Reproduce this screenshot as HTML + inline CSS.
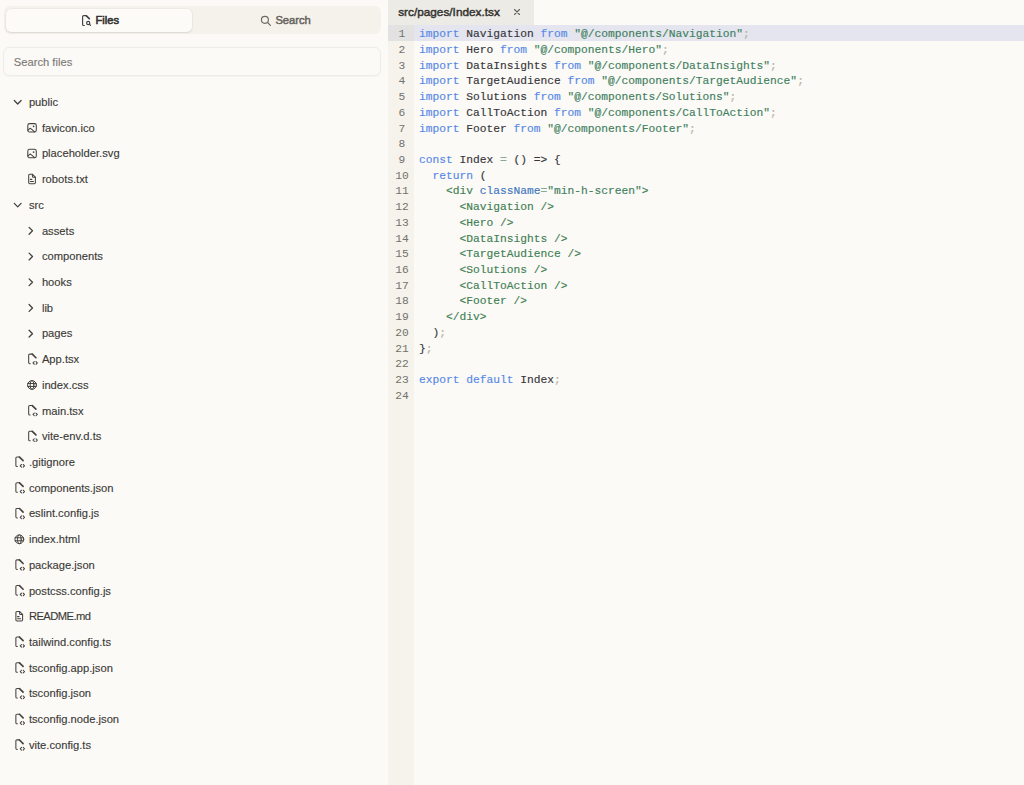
<!DOCTYPE html>
<html><head><meta charset="utf-8">
<style>
*{box-sizing:border-box;margin:0;padding:0}
html,body{width:1024px;height:785px;overflow:hidden;background:#fbfaf6;font-family:"Liberation Sans",sans-serif}
#side{position:absolute;left:0;top:0;width:388px;height:785px;background:#fbfaf6}
#tabs{position:absolute;left:3.6px;top:5.9px;width:377px;height:27.9px;background:#f4f2eb;border-radius:6px}
#tfiles{position:absolute;left:6px;top:8.7px;width:185.9px;height:23.6px;background:#fcfbf8;border-radius:5px;box-shadow:0 0 0 0.5px rgba(60,50,30,.06),0 1px 2px rgba(60,50,30,.10)}
.lbl{position:absolute;font-size:11.2px;line-height:16px;white-space:nowrap;color:#3a3936;-webkit-text-stroke:0.12px currentColor}
#search{position:absolute;left:3.3px;top:47.4px;width:377.3px;height:28.6px;border:1px solid #eeece6;border-radius:6px;background:#fbfaf7;box-shadow:0 1px 1px rgba(0,0,0,.03)}
svg.ov{position:absolute;left:0;top:0;fill:none;stroke:#44433f;stroke-linecap:round;stroke-linejoin:round}
svg.ic{position:absolute;fill:none;stroke:#44433f;stroke-width:2;stroke-linecap:round;stroke-linejoin:round}
#editor{position:absolute;left:388px;top:0;width:636px;height:785px;background:#fbfaf6}
#etab{position:absolute;left:0;top:0;width:146px;height:24.8px;background:#edebe6}
#gutter{position:absolute;left:0;top:24.8px;width:25.7px;height:761px;background:#f6f3ec}
#hl{position:absolute;left:0;top:25.2px;width:636px;height:15.7px;background:#e4e5ee}
#hlg{position:absolute;left:0;top:25.2px;width:25.7px;height:15.7px;background:#e2e2e3}
.ln{position:absolute;left:4px;width:20px;text-align:center;font-family:"Liberation Mono",monospace;font-size:11.25px;line-height:15.72px;color:#72716d}
.cl{position:absolute;left:31px;font-family:"Liberation Mono",monospace;font-size:11.25px;line-height:15.72px;white-space:pre;color:#37363b;-webkit-text-stroke:0.15px currentColor}
.k{color:#5689e6}.s{color:#3f8060}.p{color:#b8b29f}.t{color:#3f8055}.a{color:#3f76bf}.o{color:#8aa890}
</style></head><body>
<div id="side">
  <div id="tabs"></div>
  <div id="tfiles"></div>
  <!-- files tab icon -->
  <svg class="ov" width="388" height="40" viewBox="0 0 388 40" style="stroke-width:1.15"><path d="M84.4 25.5H83.7a1.1 1.1 0 0 1-1.1-1.1V16.8a1.1 1.1 0 0 1 1.1-1.1H86.3"/><path d="M86.4 15.8 89.3 18.7" stroke-width="1.65"/><circle cx="88.2" cy="23" r="1.6"/><path d="M89.4 24.2 90.6 25.4"/></svg>
  <div class="lbl" style="left:95.4px;top:12.3px;color:#302f2c;-webkit-text-stroke:0.55px currentColor">Files</div>
  <svg class="ov" width="388" height="40" viewBox="0 0 388 40" style="stroke:#6b6863;stroke-width:1.15"><circle cx="264.9" cy="19.8" r="3.5"/><path d="M267.6 22.5 270.4 25.3"/></svg>
  <div class="lbl" style="left:275.4px;top:12.3px;color:#67645e;-webkit-text-stroke:0.5px currentColor">Search</div>
  <div id="search"></div>
  <div class="lbl" style="left:13.8px;top:54px;color:#7b7873">Search files</div>
  <div class="lbl" style="left:28.90px;top:93.92px">public</div>
<div class="lbl" style="left:41.90px;top:119.64px">favicon.ico</div>
<div class="lbl" style="left:41.90px;top:145.36px">placeholder.svg</div>
<div class="lbl" style="left:41.90px;top:171.08px">robots.txt</div>
<div class="lbl" style="left:28.90px;top:196.80px">src</div>
<div class="lbl" style="left:41.90px;top:222.52px">assets</div>
<div class="lbl" style="left:41.90px;top:248.24px">components</div>
<div class="lbl" style="left:41.90px;top:273.96px">hooks</div>
<div class="lbl" style="left:41.90px;top:299.68px">lib</div>
<div class="lbl" style="left:41.90px;top:325.40px">pages</div>
<div class="lbl" style="left:41.90px;top:351.12px">App.tsx</div>
<div class="lbl" style="left:41.90px;top:376.84px">index.css</div>
<div class="lbl" style="left:41.90px;top:402.56px">main.tsx</div>
<div class="lbl" style="left:41.90px;top:428.28px">vite-env.d.ts</div>
<div class="lbl" style="left:28.90px;top:454.00px">.gitignore</div>
<div class="lbl" style="left:28.90px;top:479.72px">components.json</div>
<div class="lbl" style="left:28.90px;top:505.44px">eslint.config.js</div>
<div class="lbl" style="left:28.90px;top:531.16px">index.html</div>
<div class="lbl" style="left:28.90px;top:556.88px">package.json</div>
<div class="lbl" style="left:28.90px;top:582.60px">postcss.config.js</div>
<div class="lbl" style="left:28.90px;top:608.32px;letter-spacing:-0.55px">README.md</div>
<div class="lbl" style="left:28.90px;top:634.04px">tailwind.config.ts</div>
<div class="lbl" style="left:28.90px;top:659.76px">tsconfig.app.json</div>
<div class="lbl" style="left:28.90px;top:685.48px">tsconfig.json</div>
<div class="lbl" style="left:28.90px;top:711.20px">tsconfig.node.json</div>
<div class="lbl" style="left:28.90px;top:736.92px">vite.config.ts</div>
<svg class="ov" width="388" height="785" viewBox="0 0 388 785" style="stroke-width:1.05"><g transform="translate(13.00 99.00)" stroke-width="1.3"><path d="M1.3 1.5 4.7 5 8.1 1.5"/></g><g transform="translate(26.70 120.52)"><rect x="1.1" y="3.1" width="8.5" height="8.4" rx="1.8"/><circle cx="6.9" cy="5.8" r="0.9" fill="#44433f" stroke="none"/><path d="M1.3 9.6l1.4-1.3a1.3 1.3 0 0 1 1.8 0L7.9 11.4"/></g><g transform="translate(26.70 146.24)"><rect x="1.1" y="3.1" width="8.5" height="8.4" rx="1.8"/><circle cx="6.9" cy="5.8" r="0.9" fill="#44433f" stroke="none"/><path d="M1.3 9.6l1.4-1.3a1.3 1.3 0 0 1 1.8 0L7.9 11.4"/></g><g transform="translate(26.70 171.96)"><path d="M5.8 2.3H3.1a1.1 1.1 0 0 0-1.1 1.1v7.2a1.1 1.1 0 0 0 1.1 1.1h4.5a1.1 1.1 0 0 0 1.1-1.1V5.2z"/><path d="M5.7 2.4v1.9a1 1 0 0 0 1 1h1.9"/><path d="M3.6 7.4h1.6"/><path d="M3.6 9.5h3.2"/></g><g transform="translate(13.00 201.88)" stroke-width="1.3"><path d="M1.3 1.5 4.7 5 8.1 1.5"/></g><g transform="translate(26.90 226.20)" stroke-width="1.3"><path d="M2.2 1.2 5.6 4.6 2.2 8"/></g><g transform="translate(26.90 251.92)" stroke-width="1.3"><path d="M2.2 1.2 5.6 4.6 2.2 8"/></g><g transform="translate(26.90 277.64)" stroke-width="1.3"><path d="M2.2 1.2 5.6 4.6 2.2 8"/></g><g transform="translate(26.90 303.36)" stroke-width="1.3"><path d="M2.2 1.2 5.6 4.6 2.2 8"/></g><g transform="translate(26.90 329.08)" stroke-width="1.3"><path d="M2.2 1.2 5.6 4.6 2.2 8"/></g><g transform="translate(26.70 352.00)"><path d="M3.45 11.65H3.07a1.1 1.1 0 0 1-1.1-1.1V3.2a1.1 1.1 0 0 1 1.1-1.1H5.5"/><path d="M5.6 2.2 9.2 5.75" stroke-width="1.65"/><path d="M7.6 9.6 6.3 10.95 7.6 12.3"/><path d="M9.3 9.6 10.6 10.95 9.3 12.3"/></g><g transform="translate(26.00 378.97)" stroke-width="1.0"><circle cx="6" cy="6" r="4.4"/><ellipse cx="6" cy="6" rx="1.9" ry="4.4"/><path d="M1.8 4.5h8.4M1.8 7.5h8.4"/></g><g transform="translate(26.70 403.44)"><path d="M3.45 11.65H3.07a1.1 1.1 0 0 1-1.1-1.1V3.2a1.1 1.1 0 0 1 1.1-1.1H5.5"/><path d="M5.6 2.2 9.2 5.75" stroke-width="1.65"/><path d="M7.6 9.6 6.3 10.95 7.6 12.3"/><path d="M9.3 9.6 10.6 10.95 9.3 12.3"/></g><g transform="translate(26.70 429.16)"><path d="M3.45 11.65H3.07a1.1 1.1 0 0 1-1.1-1.1V3.2a1.1 1.1 0 0 1 1.1-1.1H5.5"/><path d="M5.6 2.2 9.2 5.75" stroke-width="1.65"/><path d="M7.6 9.6 6.3 10.95 7.6 12.3"/><path d="M9.3 9.6 10.6 10.95 9.3 12.3"/></g><g transform="translate(13.90 454.88)"><path d="M3.45 11.65H3.07a1.1 1.1 0 0 1-1.1-1.1V3.2a1.1 1.1 0 0 1 1.1-1.1H5.5"/><path d="M5.6 2.2 9.2 5.75" stroke-width="1.65"/><path d="M7.6 9.6 6.3 10.95 7.6 12.3"/><path d="M9.3 9.6 10.6 10.95 9.3 12.3"/></g><g transform="translate(13.90 480.60)"><path d="M3.45 11.65H3.07a1.1 1.1 0 0 1-1.1-1.1V3.2a1.1 1.1 0 0 1 1.1-1.1H5.5"/><path d="M5.6 2.2 9.2 5.75" stroke-width="1.65"/><path d="M7.6 9.6 6.3 10.95 7.6 12.3"/><path d="M9.3 9.6 10.6 10.95 9.3 12.3"/></g><g transform="translate(13.90 506.32)"><path d="M3.45 11.65H3.07a1.1 1.1 0 0 1-1.1-1.1V3.2a1.1 1.1 0 0 1 1.1-1.1H5.5"/><path d="M5.6 2.2 9.2 5.75" stroke-width="1.65"/><path d="M7.6 9.6 6.3 10.95 7.6 12.3"/><path d="M9.3 9.6 10.6 10.95 9.3 12.3"/></g><g transform="translate(13.35 533.29)" stroke-width="1.0"><circle cx="6" cy="6" r="4.4"/><ellipse cx="6" cy="6" rx="1.9" ry="4.4"/><path d="M1.8 4.5h8.4M1.8 7.5h8.4"/></g><g transform="translate(13.90 557.76)"><path d="M3.45 11.65H3.07a1.1 1.1 0 0 1-1.1-1.1V3.2a1.1 1.1 0 0 1 1.1-1.1H5.5"/><path d="M5.6 2.2 9.2 5.75" stroke-width="1.65"/><path d="M7.6 9.6 6.3 10.95 7.6 12.3"/><path d="M9.3 9.6 10.6 10.95 9.3 12.3"/></g><g transform="translate(13.90 583.48)"><path d="M3.45 11.65H3.07a1.1 1.1 0 0 1-1.1-1.1V3.2a1.1 1.1 0 0 1 1.1-1.1H5.5"/><path d="M5.6 2.2 9.2 5.75" stroke-width="1.65"/><path d="M7.6 9.6 6.3 10.95 7.6 12.3"/><path d="M9.3 9.6 10.6 10.95 9.3 12.3"/></g><g transform="translate(13.90 609.20)"><path d="M5.8 2.3H3.1a1.1 1.1 0 0 0-1.1 1.1v7.2a1.1 1.1 0 0 0 1.1 1.1h4.5a1.1 1.1 0 0 0 1.1-1.1V5.2z"/><path d="M5.7 2.4v1.9a1 1 0 0 0 1 1h1.9"/><path d="M3.6 7.4h1.6"/><path d="M3.6 9.5h3.2"/></g><g transform="translate(13.90 634.92)"><path d="M3.45 11.65H3.07a1.1 1.1 0 0 1-1.1-1.1V3.2a1.1 1.1 0 0 1 1.1-1.1H5.5"/><path d="M5.6 2.2 9.2 5.75" stroke-width="1.65"/><path d="M7.6 9.6 6.3 10.95 7.6 12.3"/><path d="M9.3 9.6 10.6 10.95 9.3 12.3"/></g><g transform="translate(13.90 660.64)"><path d="M3.45 11.65H3.07a1.1 1.1 0 0 1-1.1-1.1V3.2a1.1 1.1 0 0 1 1.1-1.1H5.5"/><path d="M5.6 2.2 9.2 5.75" stroke-width="1.65"/><path d="M7.6 9.6 6.3 10.95 7.6 12.3"/><path d="M9.3 9.6 10.6 10.95 9.3 12.3"/></g><g transform="translate(13.90 686.36)"><path d="M3.45 11.65H3.07a1.1 1.1 0 0 1-1.1-1.1V3.2a1.1 1.1 0 0 1 1.1-1.1H5.5"/><path d="M5.6 2.2 9.2 5.75" stroke-width="1.65"/><path d="M7.6 9.6 6.3 10.95 7.6 12.3"/><path d="M9.3 9.6 10.6 10.95 9.3 12.3"/></g><g transform="translate(13.90 712.08)"><path d="M3.45 11.65H3.07a1.1 1.1 0 0 1-1.1-1.1V3.2a1.1 1.1 0 0 1 1.1-1.1H5.5"/><path d="M5.6 2.2 9.2 5.75" stroke-width="1.65"/><path d="M7.6 9.6 6.3 10.95 7.6 12.3"/><path d="M9.3 9.6 10.6 10.95 9.3 12.3"/></g><g transform="translate(13.90 737.80)"><path d="M3.45 11.65H3.07a1.1 1.1 0 0 1-1.1-1.1V3.2a1.1 1.1 0 0 1 1.1-1.1H5.5"/><path d="M5.6 2.2 9.2 5.75" stroke-width="1.65"/><path d="M7.6 9.6 6.3 10.95 7.6 12.3"/><path d="M9.3 9.6 10.6 10.95 9.3 12.3"/></g></svg>
</div>
<div id="editor">
  <div id="etab"></div>
  <div class="lbl" style="left:10.2px;top:3.6px;font-size:11.8px;color:#34332f;-webkit-text-stroke:0.45px currentColor">src/pages/Index.tsx</div>
  <svg class="ic" style="left:125.9px;top:8.8px;width:6px;height:6px;stroke:#64625d;stroke-width:1.1" viewBox="0 0 6 6"><path d="M0.5 0.5l5 5M5.5 0.5l-5 5"/></svg>
  <div id="gutter"></div>
  <div id="hl"></div>
  <div id="hlg"></div>
  <div class="ln" style="top:27.20px">1</div>
<div class="cl" style="top:27.20px"><span class="k">import</span> Navigation <span class="k">from</span> <span class="s">"@/components/Navigation"</span><span class="p">;</span></div>
<div class="ln" style="top:42.92px">2</div>
<div class="cl" style="top:42.92px"><span class="k">import</span> Hero <span class="k">from</span> <span class="s">"@/components/Hero"</span><span class="p">;</span></div>
<div class="ln" style="top:58.64px">3</div>
<div class="cl" style="top:58.64px"><span class="k">import</span> DataInsights <span class="k">from</span> <span class="s">"@/components/DataInsights"</span><span class="p">;</span></div>
<div class="ln" style="top:74.36px">4</div>
<div class="cl" style="top:74.36px"><span class="k">import</span> TargetAudience <span class="k">from</span> <span class="s">"@/components/TargetAudience"</span><span class="p">;</span></div>
<div class="ln" style="top:90.08px">5</div>
<div class="cl" style="top:90.08px"><span class="k">import</span> Solutions <span class="k">from</span> <span class="s">"@/components/Solutions"</span><span class="p">;</span></div>
<div class="ln" style="top:105.80px">6</div>
<div class="cl" style="top:105.80px"><span class="k">import</span> CallToAction <span class="k">from</span> <span class="s">"@/components/CallToAction"</span><span class="p">;</span></div>
<div class="ln" style="top:121.52px">7</div>
<div class="cl" style="top:121.52px"><span class="k">import</span> Footer <span class="k">from</span> <span class="s">"@/components/Footer"</span><span class="p">;</span></div>
<div class="ln" style="top:137.24px">8</div>
<div class="cl" style="top:137.24px"></div>
<div class="ln" style="top:152.96px">9</div>
<div class="cl" style="top:152.96px"><span class="k">const</span> Index <span class="o">=</span> () =&gt; {</div>
<div class="ln" style="top:168.68px">10</div>
<div class="cl" style="top:168.68px">  <span class="k">return</span> (</div>
<div class="ln" style="top:184.40px">11</div>
<div class="cl" style="top:184.40px">    <span class="t">&lt;div</span> <span class="a">className</span><span class="o">=</span><span class="s">"min-h-screen"</span><span class="t">&gt;</span></div>
<div class="ln" style="top:200.12px">12</div>
<div class="cl" style="top:200.12px">      <span class="t">&lt;Navigation /&gt;</span></div>
<div class="ln" style="top:215.84px">13</div>
<div class="cl" style="top:215.84px">      <span class="t">&lt;Hero /&gt;</span></div>
<div class="ln" style="top:231.56px">14</div>
<div class="cl" style="top:231.56px">      <span class="t">&lt;DataInsights /&gt;</span></div>
<div class="ln" style="top:247.28px">15</div>
<div class="cl" style="top:247.28px">      <span class="t">&lt;TargetAudience /&gt;</span></div>
<div class="ln" style="top:263.00px">16</div>
<div class="cl" style="top:263.00px">      <span class="t">&lt;Solutions /&gt;</span></div>
<div class="ln" style="top:278.72px">17</div>
<div class="cl" style="top:278.72px">      <span class="t">&lt;CallToAction /&gt;</span></div>
<div class="ln" style="top:294.44px">18</div>
<div class="cl" style="top:294.44px">      <span class="t">&lt;Footer /&gt;</span></div>
<div class="ln" style="top:310.16px">19</div>
<div class="cl" style="top:310.16px">    <span class="t">&lt;/div&gt;</span></div>
<div class="ln" style="top:325.88px">20</div>
<div class="cl" style="top:325.88px">  )<span class="p">;</span></div>
<div class="ln" style="top:341.60px">21</div>
<div class="cl" style="top:341.60px">}<span class="p">;</span></div>
<div class="ln" style="top:357.32px">22</div>
<div class="cl" style="top:357.32px"></div>
<div class="ln" style="top:373.04px">23</div>
<div class="cl" style="top:373.04px"><span class="k">export</span> <span class="k">default</span> Index<span class="p">;</span></div>
<div class="ln" style="top:388.76px">24</div>
<div class="cl" style="top:388.76px"></div>
</div>
</body></html>
